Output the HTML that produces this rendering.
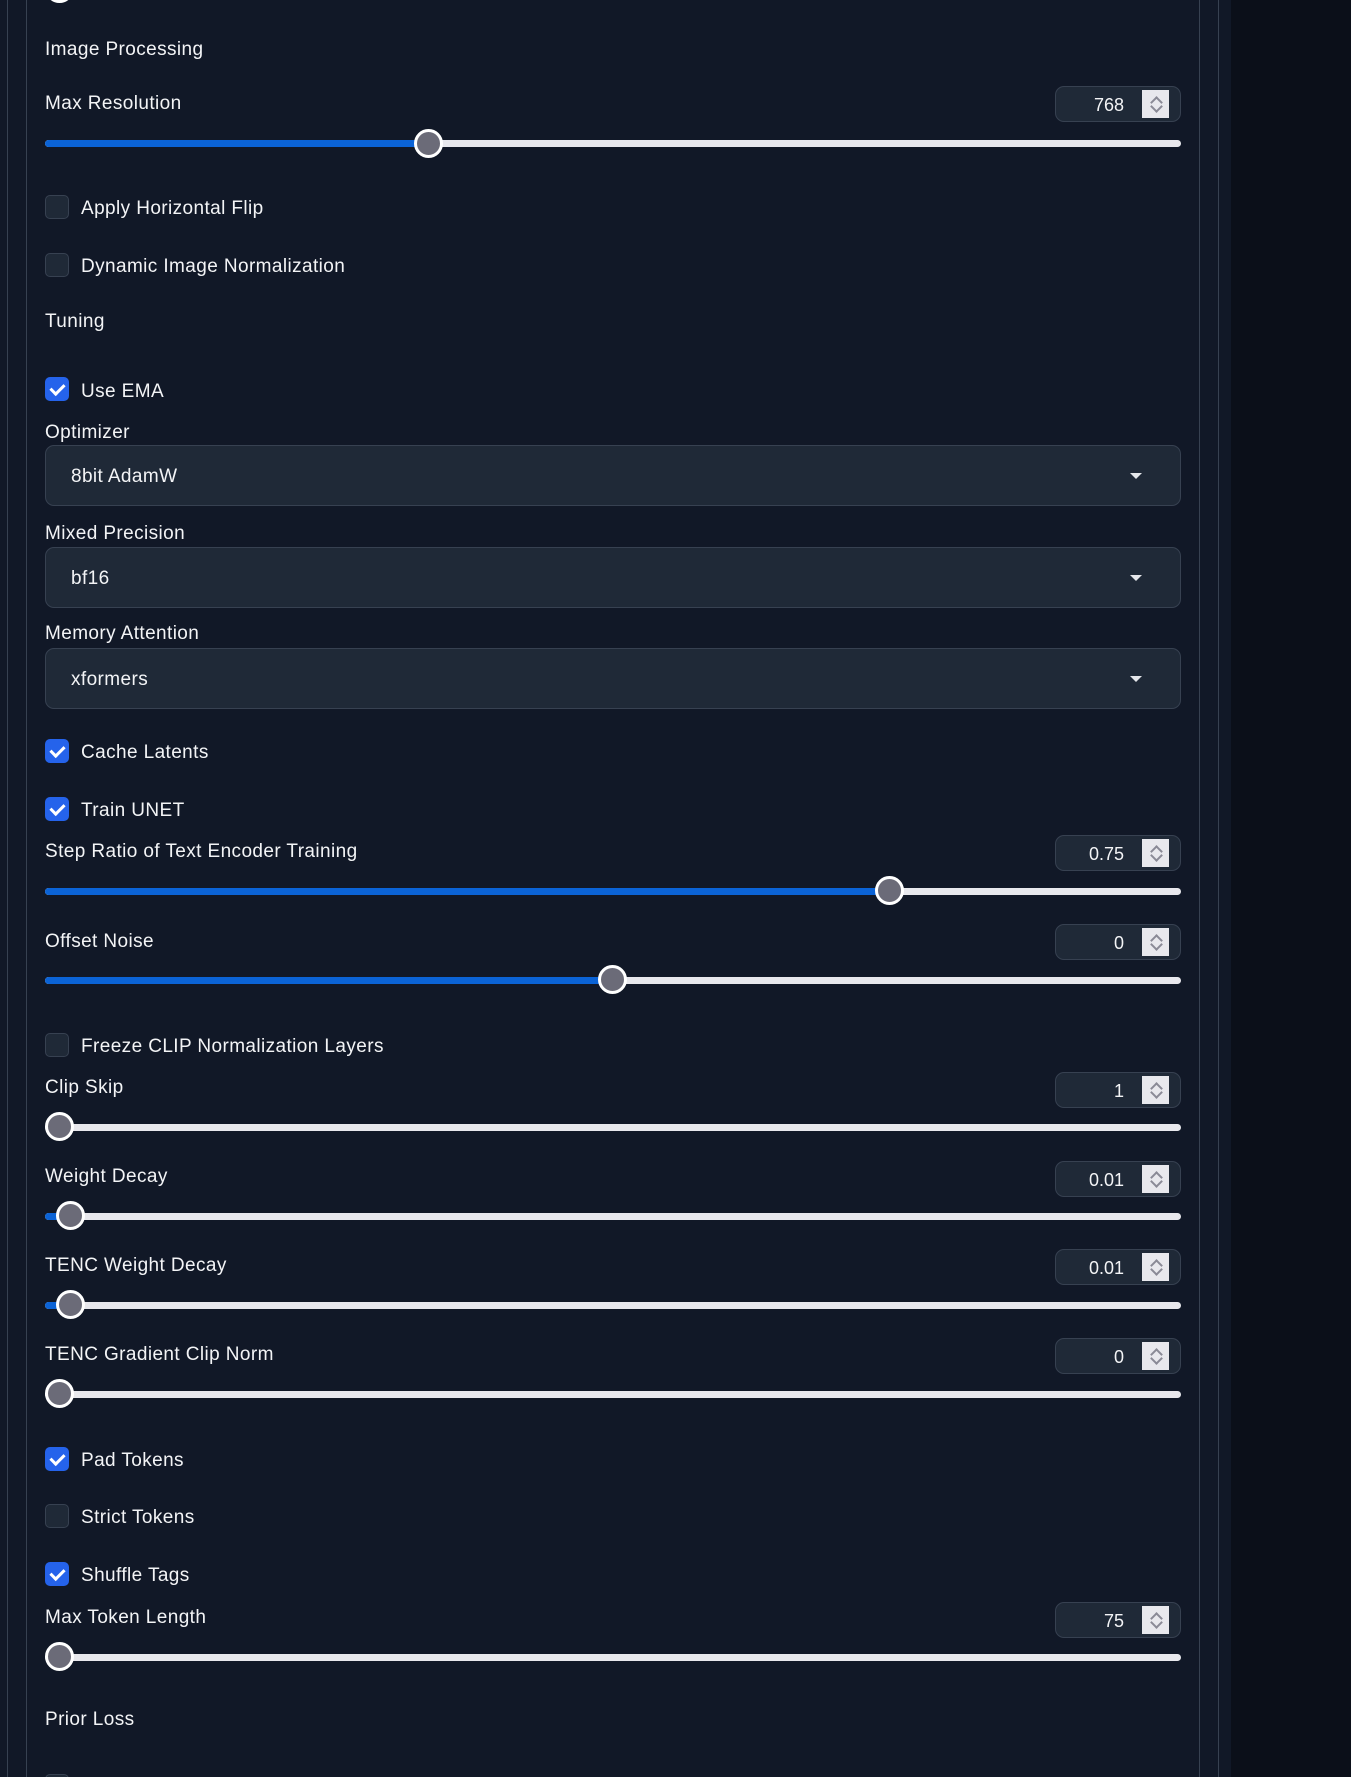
<!DOCTYPE html>
<html><head><meta charset="utf-8"><style>
*{box-sizing:border-box;margin:0;padding:0}
html,body{width:1351px;height:1777px;overflow:hidden}
body{background:#0b0f19;position:relative;font-family:"Liberation Sans",sans-serif;color:#f3f4f6;font-size:19px;letter-spacing:0.4px}
.col{position:absolute;left:0;top:0;width:1231px;height:1777px;background:#111827}
.vl{position:absolute;top:0;height:1777px;width:1px;background:#374151}
.t{position:absolute;left:45px;line-height:20px;white-space:nowrap;margin-top:2px}
.cb{position:absolute;left:45px;width:24px;height:24px;border-radius:5px;background:#1f2937;border:1px solid #374151}
.cb.on{background:#2563eb;border-color:#2563eb}
.cb.on:after{content:"";position:absolute;left:7px;top:3px;width:6px;height:11px;border:solid #fff;border-width:0 3px 3px 0;transform:rotate(45deg)}
.cl{position:absolute;left:81px;line-height:20px;white-space:nowrap;margin-top:2px}
.dd{position:absolute;left:45px;width:1136px;height:61px;background:#1f2937;border:1px solid #374151;border-radius:9px}
.dd span{position:absolute;left:25px;top:20px;line-height:22px}
.dd i{position:absolute;left:1084px;top:27px;border-left:6px solid transparent;border-right:6px solid transparent;border-top:6px solid #e5e7eb}
.nb{position:absolute;left:1055px;width:126px;height:36px;background:#1f2937;border:1px solid #374151;border-radius:9px}
.nb span{position:absolute;right:56px;top:8px;line-height:20px;font-size:18px;letter-spacing:0}
.nb b{position:absolute;left:86px;top:3px;width:27px;height:28px;background:#e8e8ed}
.nb b:before,.nb b:after{content:"";position:absolute;left:10px;width:7px;height:7px;border:solid #8a8a96;border-width:2px 0 0 2px}
.nb b:before{top:8px;transform:rotate(45deg)}
.nb b:after{top:12px;transform:rotate(225deg)}
.tr{position:absolute;left:45px;width:1136px;height:7px;border-radius:4px;background:#e8e8ed}
.tr u{position:absolute;left:0;top:0;height:7px;border-radius:4px;background:#0b63d6}
.th{position:absolute;width:29px;height:29px;border-radius:50%;background:#6b6b78;border:3px solid #fff}
</style></head><body>
<div class="col"></div>
<div class="vl" style="left:7px"></div>
<div class="vl" style="left:26px"></div>
<div class="vl" style="left:1199px"></div>
<div class="vl" style="left:1218px"></div>
<div class="th" style="left:45px;top:-26px"></div>

<div class="t" style="top:38px">Image Processing</div>
<div class="t" style="top:92px">Max Resolution</div>
<div class="nb" style="top:86px"><span>768</span><b></b></div>
<div class="tr" style="top:140px"><u style="width:385px"></u></div>
<div class="th" style="left:414px;top:129px"></div>

<div class="cb" style="top:195px"></div><div class="cl" style="top:197px">Apply Horizontal Flip</div>
<div class="cb" style="top:253px"></div><div class="cl" style="top:255px">Dynamic Image Normalization</div>
<div class="t" style="top:310px">Tuning</div>
<div class="cb on" style="top:377px"></div><div class="cl" style="top:380px">Use EMA</div>
<div class="t" style="top:421px">Optimizer</div>
<div class="dd" style="top:445px"><span>8bit AdamW</span><i></i></div>
<div class="t" style="top:522px">Mixed Precision</div>
<div class="dd" style="top:547px"><span>bf16</span><i></i></div>
<div class="t" style="top:622px">Memory Attention</div>
<div class="dd" style="top:648px"><span>xformers</span><i></i></div>
<div class="cb on" style="top:739px"></div><div class="cl" style="top:741px">Cache Latents</div>
<div class="cb on" style="top:797px"></div><div class="cl" style="top:799px">Train UNET</div>

<div class="t" style="top:840px">Step Ratio of Text Encoder Training</div>
<div class="nb" style="top:835px"><span>0.75</span><b></b></div>
<div class="tr" style="top:888px"><u style="width:846px"></u></div>
<div class="th" style="left:875px;top:876px"></div>

<div class="t" style="top:930px">Offset Noise</div>
<div class="nb" style="top:924px"><span>0</span><b></b></div>
<div class="tr" style="top:977px"><u style="width:569px"></u></div>
<div class="th" style="left:598px;top:965px"></div>

<div class="cb" style="top:1033px"></div><div class="cl" style="top:1035px">Freeze CLIP Normalization Layers</div>

<div class="t" style="top:1076px">Clip Skip</div>
<div class="nb" style="top:1072px"><span>1</span><b></b></div>
<div class="tr" style="top:1124px"></div>
<div class="th" style="left:45px;top:1112px"></div>

<div class="t" style="top:1165px">Weight Decay</div>
<div class="nb" style="top:1161px"><span>0.01</span><b></b></div>
<div class="tr" style="top:1213px"><u style="width:25px"></u></div>
<div class="th" style="left:56px;top:1201px"></div>

<div class="t" style="top:1254px">TENC Weight Decay</div>
<div class="nb" style="top:1249px"><span>0.01</span><b></b></div>
<div class="tr" style="top:1302px"><u style="width:25px"></u></div>
<div class="th" style="left:56px;top:1290px"></div>

<div class="t" style="top:1343px">TENC Gradient Clip Norm</div>
<div class="nb" style="top:1338px"><span>0</span><b></b></div>
<div class="tr" style="top:1391px"></div>
<div class="th" style="left:45px;top:1379px"></div>

<div class="cb on" style="top:1447px"></div><div class="cl" style="top:1449px">Pad Tokens</div>
<div class="cb" style="top:1504px"></div><div class="cl" style="top:1506px">Strict Tokens</div>
<div class="cb on" style="top:1562px"></div><div class="cl" style="top:1564px">Shuffle Tags</div>

<div class="t" style="top:1606px">Max Token Length</div>
<div class="nb" style="top:1602px"><span>75</span><b></b></div>
<div class="tr" style="top:1654px"></div>
<div class="th" style="left:45px;top:1642px"></div>

<div class="t" style="top:1708px">Prior Loss</div>
<div class="cb" style="top:1774px"></div>
</body></html>
